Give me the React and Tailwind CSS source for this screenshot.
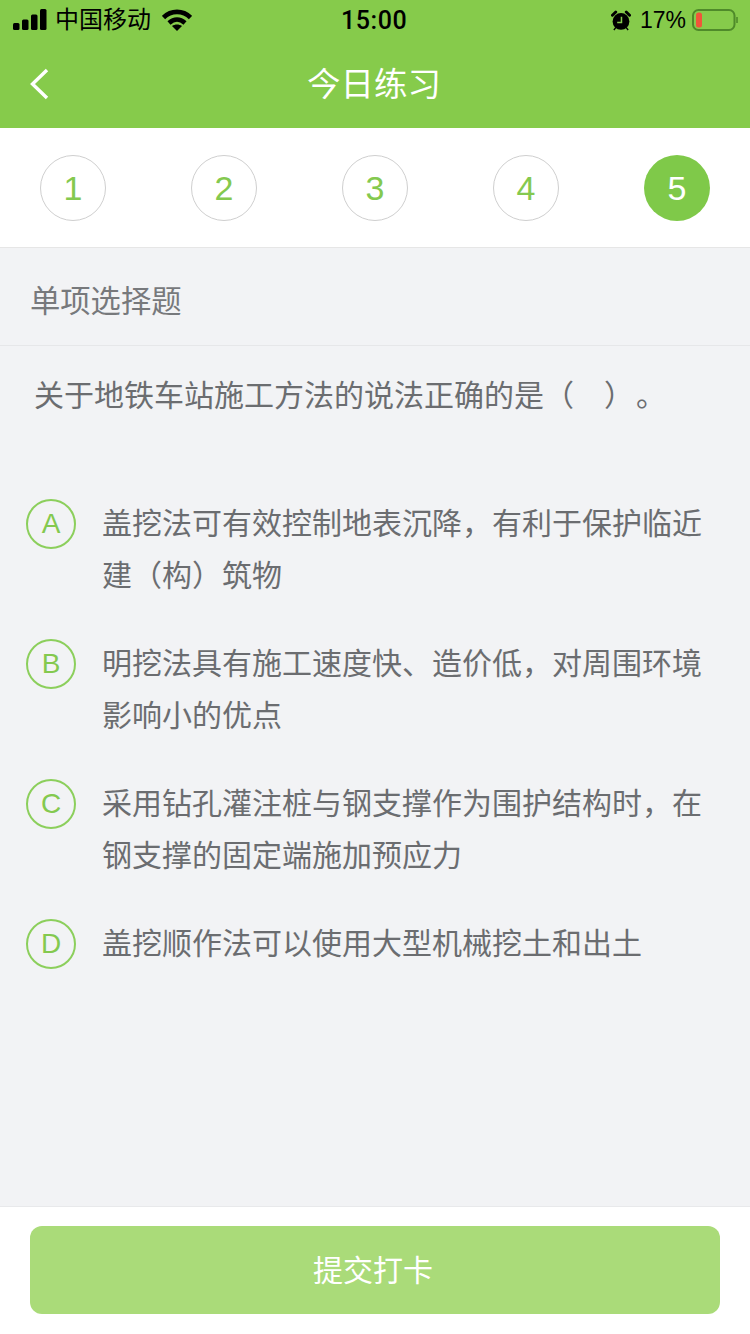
const CJK = '"Liberation Sans", "Noto Sans CJK SC", sans-serif';

function StatusBar() {
  return (
    <div className="relative flex h-10 items-center justify-between pl-[13px] pr-[12px] text-black">
      <div className="flex items-center">
        <svg width="34" height="22" viewBox="0 0 34 22" fill="#000">
          <rect x="0" y="14" width="6.5" height="7" rx="1.5" />
          <rect x="9" y="10.5" width="6.5" height="10.5" rx="1.5" />
          <rect x="18" y="5.5" width="6.5" height="15.5" rx="1.5" />
          <rect x="27" y="0" width="6.5" height="21" rx="1.5" />
        </svg>
        <span className="ml-[8px] text-[24px] leading-none">中国移动</span>
        <svg className="ml-[11px]" width="30" height="22" viewBox="0 0 30 22" fill="none" stroke="#000" strokeWidth="4.6">
          <path d="M1.5 8.5 C9 1 21 1 28.5 8.5" />
          <path d="M7 14 C12 9.5 18 9.5 23 14" />
          <path d="M15 22 L10 17 C13 15 17 15 20 17 Z" fill="#000" stroke="none" />
        </svg>
      </div>
      <span className="absolute left-[341px] top-[7px] text-[25px] font-medium leading-[28px] tracking-[0.6px] font-['Roboto']">15:00</span>
      <div className="flex items-center">
        <svg width="20" height="21" viewBox="0 0 21 21">
          <circle cx="10.5" cy="11.5" r="8.8" fill="#000" />
          <path d="M1.5 5 L5 1.5 M19.5 5 L16 1.5" stroke="#000" strokeWidth="3" strokeLinecap="round" />
          <path d="M3 20.5 L5 18 M18 20.5 L16 18" stroke="#000" strokeWidth="1.5" />
          <path d="M11 6.5 V12.5 H6.5" stroke="#86cb4d" strokeWidth="1.6" fill="none" />
        </svg>
        <span className="ml-[9px] text-[23px] leading-none">17%</span>
        <svg className="ml-[6px]" width="46" height="24" viewBox="0 0 46 24" fill="none">
          <rect x="1" y="2" width="41.5" height="20" rx="5.5" stroke="#4f8a2a" strokeWidth="2" />
          <rect x="4" y="4.5" width="6" height="15" rx="2.5" fill="#f0553a" />
          <path d="M45 9 V15" stroke="#4f8a2a" strokeWidth="1.6" />
        </svg>
      </div>
    </div>
  );
}

function Header() {
  return (
    <div className="bg-[#86cb4b]">
      <StatusBar />
      <div className="relative flex h-[88px] items-start justify-center pt-[23px]">
        <svg className="absolute left-[29px] top-[28px]" width="20" height="32" viewBox="0 0 20 32" fill="none" stroke="#fff" strokeWidth="3.4">
          <path d="M18 2 L3.5 16 L18 30" />
        </svg>
        <span className="mr-[2px] text-[33.5px] leading-[44px] text-white">今日练习</span>
      </div>
    </div>
  );
}

function Step({ n, active }) {
  return (
    <div
      className={
        active
          ? "flex h-[66px] w-[66px] items-center justify-center rounded-full bg-[#7fc949] text-[34px] font-light text-white"
          : "flex h-[66px] w-[66px] items-center justify-center rounded-full border border-[#cfcfcf] text-[34px] font-light text-[#84c94f]"
      }
    >
      {n}
    </div>
  );
}

function Option({ letter, children, h }) {
  return (
    <div className={`flex ${h}`}>
      <div className="flex h-[50px] w-[50px] shrink-0 items-center justify-center rounded-full border-2 border-[#8ccf5c] text-[28px] text-[#84c94f]">
        {letter}
      </div>
      <div className="ml-[26px] -mt-[1px] w-[610px] text-[30px] leading-[52px] text-[#6b6d70]">{children}</div>
    </div>
  );
}

export default function App() {
  return (
    <div className="flex h-[1334px] w-[750px] flex-col overflow-hidden bg-[#f2f3f5]" style={{ fontFamily: CJK }}>
      <Header />
      <div className="flex h-[120px] items-start justify-between border-b border-[#e6e6e6] bg-white pl-[40px] pr-[40px] pt-[27px]">
        <Step n="1" />
        <Step n="2" />
        <Step n="3" />
        <Step n="4" />
        <Step n="5" active />
      </div>
      <div className="flex h-[98px] items-center border-b border-[#e6e7e9] pl-[30px] pt-[10px] text-[30.3px] text-[#77797c]">单项选择题</div>
      <div className="pl-[34px] pt-[27px] text-[30px] leading-[46px] text-[#6b6d70]">关于地铁车站施工方法的说法正确的是（　）<span className="ml-[17px]">。</span></div>
      <div className="flex flex-1 flex-col pl-[26px] pt-[80px]">
        <Option letter="A" h="h-[140px]">盖挖法可有效控制地表沉降，有利于保护临近建（构）筑物</Option>
        <Option letter="B" h="h-[140px]">明挖法具有施工速度快、造价低，对周围环境影响小的优点</Option>
        <Option letter="C" h="h-[140px]">采用钻孔灌注桩与钢支撑作为围护结构时，在钢支撑的固定端施加预应力</Option>
        <Option letter="D" h="h-[60px]">盖挖顺作法可以使用大型机械挖土和出土</Option>
      </div>
      <div className="flex h-[128px] justify-center border-t border-[#e8e9eb] bg-white pt-[19px]">
        <button className="h-[88px] w-[690px] rounded-[12px] bg-[#aadb79] pr-[4px] text-[30px] text-white">提交打卡</button>
      </div>
    </div>
  );
}
